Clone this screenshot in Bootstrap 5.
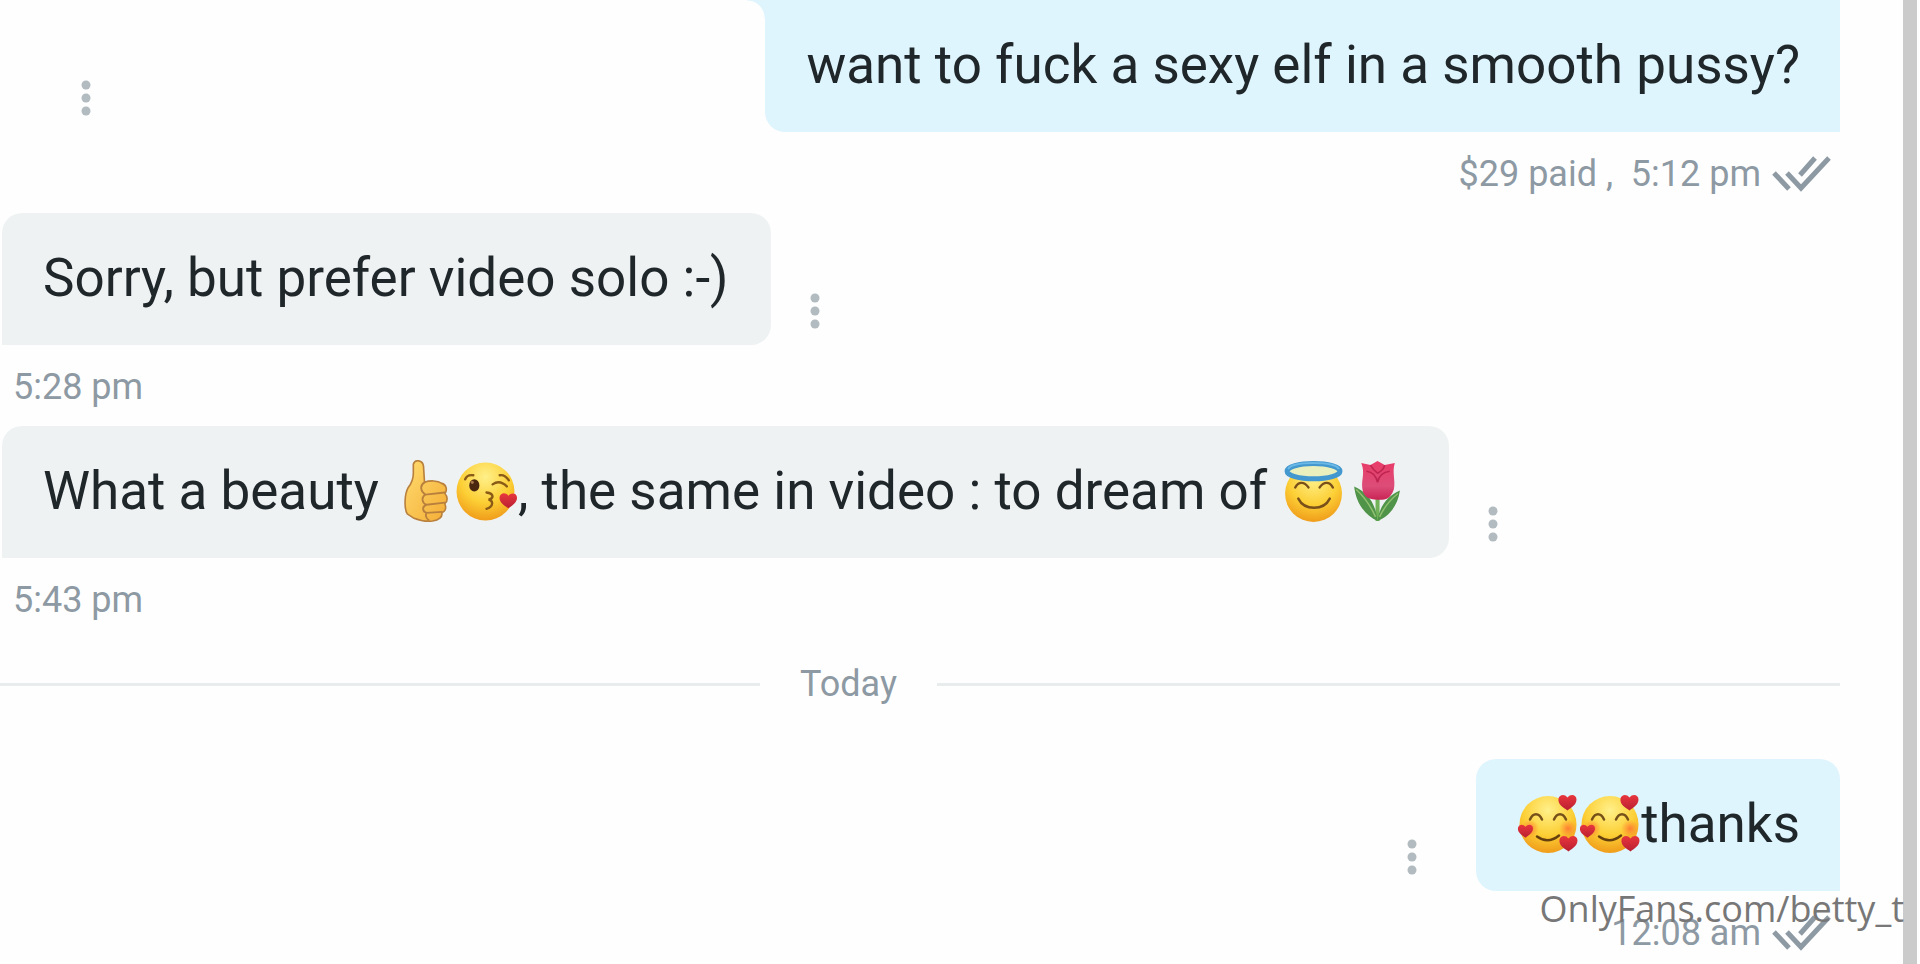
<!DOCTYPE html>
<html lang="en">
<head>
<meta charset="utf-8">
<meta name="viewport" content="width=device-width, initial-scale=1">
<title>Messages</title>
<link href="https://cdn.jsdelivr.net/npm/bootstrap@5.3.0/dist/css/bootstrap.min.css" rel="stylesheet">
<style>
  body { font-family: Roboto, "Liberation Sans", sans-serif; background: #fefefe; color: #20272b; }
  .chat { padding-right: 63px; min-width: 0; }
  .msg { padding-left: 2px; }
  .bubble { font-size: 53px; line-height: 60px; padding: 35px 43px 37px 41px; border-radius: 20px; }
  .bubble-in { background: #eff2f3; border-bottom-left-radius: 0; }
  .bubble-out { background: #dff5fd; border-bottom-right-radius: 0; padding-right: 40px; }
  .bubble-joined { border-top-left-radius: 0; border-top-right-radius: 0; }
  .bubble-joined::before {
    content: ""; position: absolute; top: 0; left: -18px; width: 18px; height: 18px;
    background: radial-gradient(circle at 0 100%, transparent 17px, #dff5fd 18px);
  }
  .emoji { width: 63px; height: 63px; margin: -4px 0; vertical-align: -10px; }
  .bubble-out .emoji { width: 62px; }
  .more { width: 24px; height: 44px; margin-bottom: 12px; color: #b2bbc0; }
  .more-in { margin-left: 32px; }
  .more-out { margin-right: 52px; }
  .more-far { margin-left: 72px; }
  .meta { height: 81px; padding: 2px 8px 0 13px; font-size: 36px; color: #8d99a3; white-space: pre; }
  .ticks { width: 60px; height: 36px; margin-left: 11px; }
  .day { height: 90px; margin-bottom: 30px; font-size: 36px; color: #8d99a3; }
  .day-line { height: 3px; background: #e9eced; }
  .day-before { width: 760px; flex: 0 1 auto; }
  .scrollbar-thumb { width: 14px; margin-right: 3px; background: #cbcbcb; }
  .watermark { right: 16px; bottom: 31px; font: 36px/48px "Open Sans", "Noto Sans", sans-serif; color: #777; }
</style>
</head>
<body>
<svg class="position-absolute" width="0" height="0" aria-hidden="true">
  <defs>
    <radialGradient id="skin" cx=".5" cy=".25" r=".8">
      <stop offset="0" stop-color="#fff08a"/><stop offset=".55" stop-color="#fccf35"/><stop offset="1" stop-color="#ee9416"/>
    </radialGradient>
    <linearGradient id="hand" x2="1" y2="1">
      <stop offset="0" stop-color="#ffdc70"/><stop offset="1" stop-color="#f4ad35"/>
    </linearGradient>
    <linearGradient id="petal" x2="0" y2="1">
      <stop offset="0" stop-color="#e93b68"/><stop offset=".65" stop-color="#dc4d78"/><stop offset="1" stop-color="#c92555"/>
    </linearGradient>
    <linearGradient id="red" x2="0" y2="1">
      <stop offset="0" stop-color="#e8363d"/><stop offset="1" stop-color="#b91f31"/>
    </linearGradient>
    <radialGradient id="blush"><stop offset="0" stop-color="#ff6534" stop-opacity=".75"/><stop offset="1" stop-color="#ff7a34" stop-opacity="0"/></radialGradient>
    <symbol id="heart" viewBox="0 0 20 18"><path fill="url(#red)" d="M10 17C6 14 0 11 1 5 2 1 7 0 10 4 13 0 19 1 19 6 19 11 14 14 10 17Z"/></symbol>
    <symbol id="dots" viewBox="0 0 24 44"><g fill="currentColor"><circle cx="12" cy="9" r="4.5"/><circle cx="12" cy="22" r="4.5"/><circle cx="12" cy="35" r="4.5"/></g></symbol>
    <symbol id="ticks" viewBox="0 0 60 36"><path fill="none" stroke="currentColor" stroke-width="5" d="M2 17 17 33M15 17 29 32 57 2M28 19 43 2"/></symbol>
    <symbol id="love" viewBox="0 0 62 62">
      <circle cx="31" cy="31" r="28.5" fill="url(#skin)"/>
      <circle cx="51" cy="35" r="9" fill="url(#blush)"/><circle cx="13" cy="35" r="9" fill="url(#blush)"/>
      <path d="M13 26C16 19 22 19 25 26M37 26C40 19 46 19 49 26" fill="none" stroke="#765019" stroke-width="2.5" stroke-linecap="round"/>
      <path d="M20 43Q31 51 42 42" fill="none" stroke="#65400e" stroke-width="2.5" stroke-linecap="round"/>
      <use href="#heart" x="40" y="0" width="21" height="18"/><use href="#heart" x="0" y="30" width="17" height="15"/><use href="#heart" x="41" y="41" width="21" height="18"/>
    </symbol>
  </defs>
</svg>

<div class="d-flex vh-100 overflow-hidden position-relative">
  <main class="chat flex-grow-1">
    <article>
      <div class="msg d-flex align-items-end">
        <button class="more more-far me-auto btn p-0 border-0 d-flex" aria-label="More"><svg width="24" height="44"><use href="#dots"/></svg></button>
        <div class="bubble bubble-out bubble-joined position-relative">want to fuck a sexy elf in a smooth pussy?</div>
      </div>
      <div class="meta d-flex align-items-center justify-content-end"><span>$29 paid ,  5:12 pm</span><svg class="ticks"><use href="#ticks"/></svg></div>
    </article>

    <article>
      <div class="msg d-flex align-items-end">
        <div class="bubble bubble-in">Sorry, but prefer video solo :-)</div>
        <button class="more more-in btn p-0 border-0 d-flex" aria-label="More"><svg width="24" height="44"><use href="#dots"/></svg></button>
      </div>
      <div class="meta d-flex align-items-center"><span>5:28 pm</span></div>
    </article>

    <article>
      <div class="msg d-flex align-items-end">
        <div class="bubble bubble-in">What a beauty <svg class="emoji" viewBox="-3 0 62 62" role="img" aria-label="thumbs up">
            <path fill="url(#hand)" stroke="#b9803d" stroke-width="1.6" stroke-linejoin="round" d="M18 4C20-1 27 0 28 6L29 22C34 20 42 20 46 23 50 24 52 29 49 33 52 36 52 41 49 43 51 48 49 51 46 52 47 56 43 59 37 60 29 61 23 59 18 57L12 53C9 48 9 34 13 27 17 22 18 19 18 13Z"/>
            <path fill="none" stroke="#b9803d" stroke-width="1.8" stroke-linecap="round" d="M29 22C24 25 25 31 30 34L49 32M30 34C25 37 27 43 31 44L49 42M31 44C26 46 27 51 31 52L46 51M31 52Q29 56 33 59"/>
          </svg><svg class="emoji" viewBox="0 0 62 62" role="img" aria-label="face blowing a kiss">
            <circle cx="30" cy="31" r="28.5" fill="url(#skin)"/>
            <ellipse cx="19" cy="25" rx="5" ry="6" fill="#4a2810"/><circle cx="17" cy="22" r="1.5" fill="#a97749"/>
            <path d="M10 19Q12 14 18 15M37 24Q44 19 51 26M44 15Q49 14 53 20M31 32C39 33 38 38 33 39 38 40 38 46 31 48" fill="none" stroke="#8a5b17" stroke-width="2.3" stroke-linecap="round"/>
            <use href="#heart" x="43" y="31" width="19" height="18"/>
          </svg>, the same in video : to dream of <svg class="emoji" viewBox="-2 0 62 62" role="img" aria-label="smiling face with halo">
            <circle cx="31" cy="33" r="28" fill="url(#skin)"/>
            <ellipse cx="31" cy="11" rx="26" ry="7.500" fill="#eaf0bd" stroke="#4398cf" stroke-width="5"/>
            <path d="M6 9Q9 3 31 3T56 9" fill="none" stroke="#69b8e6" stroke-width="2"/>
            <path d="M13 27C16 21 22 21 26 27M37 27C41 21 47 21 50 27M16 38C22 50 41 50 47 38" fill="none" stroke="#7a501a" stroke-width="2.4" stroke-linecap="round"/>
          </svg><svg class="emoji" viewBox="-3 0 62 62" role="img" aria-label="tulip">
            <path d="M31 36V60" stroke="#72b35a" stroke-width="4"/>
            <path fill="#4f9448" d="M8 26C20 31 29 41 31 60 20 55 10 44 8 26ZM53 30C42 35 33 44 31 60 42 56 51 45 53 30Z"/>
            <path d="M10 29Q22 40 29 56M51 33Q39 43 33 56" fill="none" stroke="#91bf70" stroke-width="1.5"/>
            <path fill="url(#petal)" d="M15 3 24 5 31 1 38 5 48 3C45 12 49 21 47 29 43 40 37 39 31 39 22 39 17 36 16 28 15 19 19 13 15 3Z"/>
            <path d="M24 5Q27 10 31 13 37 10 38 5M20 11Q29 12 31 22 33 12 43 11" fill="none" stroke="#bd244f" stroke-width="1.5"/>
          </svg></div>
        <button class="more more-in btn p-0 border-0 d-flex" aria-label="More"><svg width="24" height="44"><use href="#dots"/></svg></button>
      </div>
      <div class="meta d-flex align-items-center"><span>5:43 pm</span></div>
    </article>

    <div class="day d-flex align-items-center">
      <div class="day-line day-before"></div>
      <span class="px-4 mx-3">Today</span>
      <div class="day-line flex-grow-1"></div>
    </div>

    <article>
      <div class="msg d-flex align-items-end justify-content-end">
        <button class="more more-out btn p-0 border-0 d-flex" aria-label="More"><svg width="24" height="44"><use href="#dots"/></svg></button>
        <div class="bubble bubble-out"><svg class="emoji" role="img" aria-label="smiling face with hearts"><use href="#love"/></svg><svg class="emoji" role="img" aria-label="smiling face with hearts"><use href="#love"/></svg>thanks</div>
      </div>
      <div class="meta d-flex align-items-center justify-content-end"><span>12:08 am</span><svg class="ticks"><use href="#ticks"/></svg></div>
    </article>
  </main>
  <div class="scrollbar-thumb flex-shrink-0"></div>
  <div class="watermark position-absolute">OnlyFans.com/betty_t</div>
</div>
<script src="https://cdn.jsdelivr.net/npm/bootstrap@5.3.0/dist/js/bootstrap.bundle.min.js"></script>
</body>
</html>
